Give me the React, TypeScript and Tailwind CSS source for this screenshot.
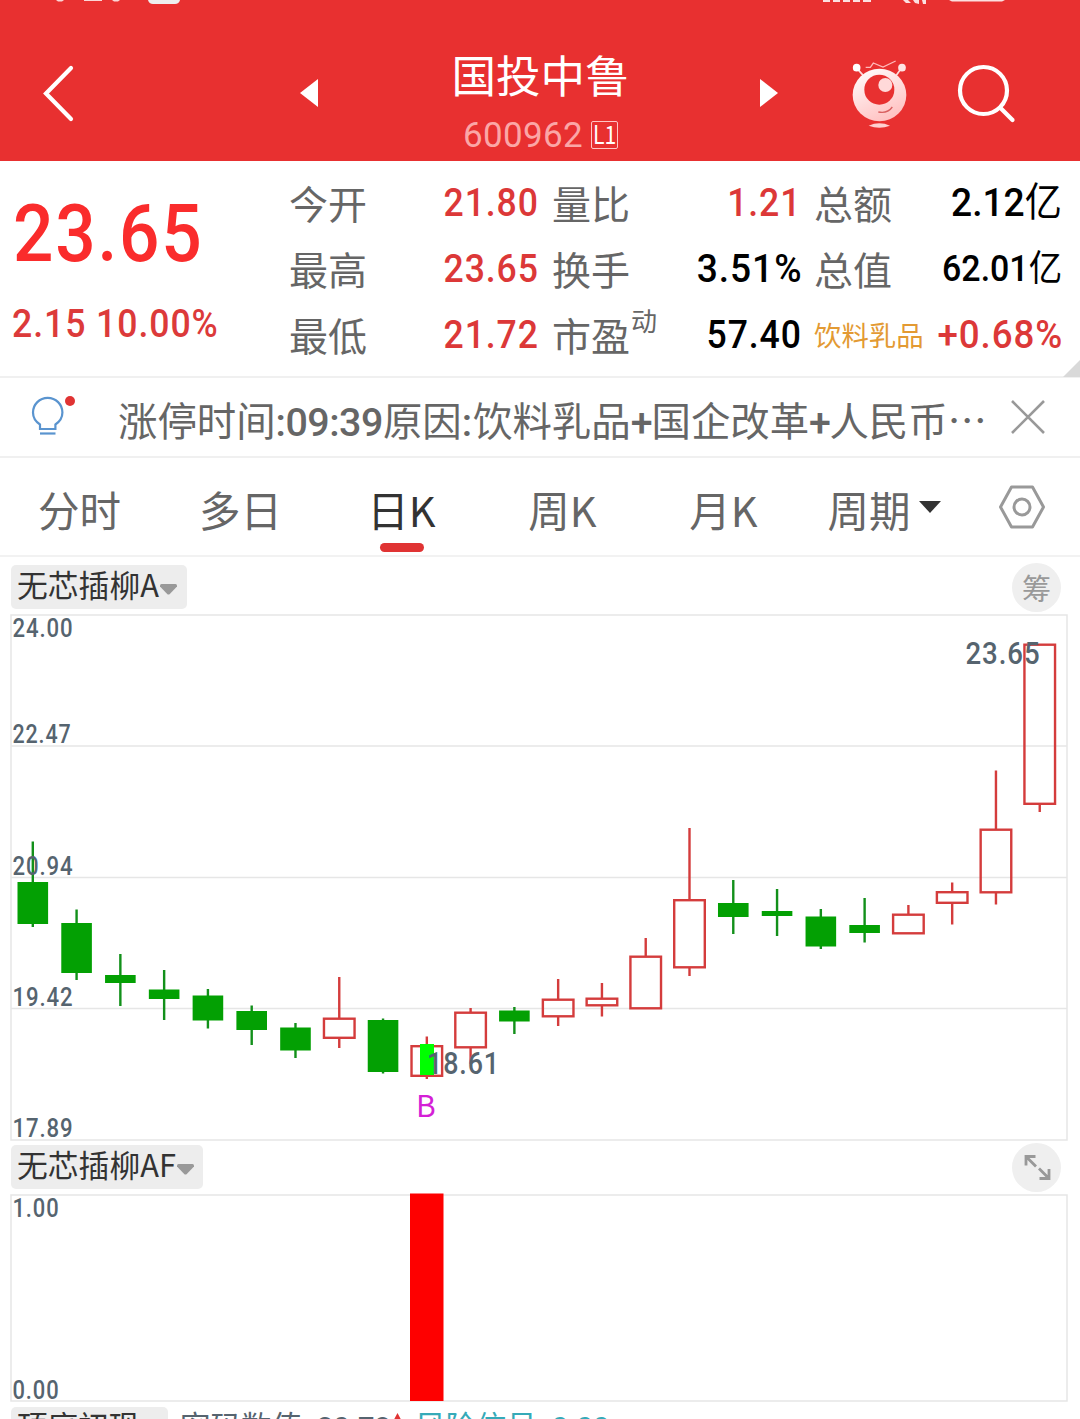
import type { ReactNode } from 'react';

type Candle = { up: boolean; high: number; top: number; bottom: number; low: number };

// Vertical positions inside the price pane, left to right.
const candles: Candle[] = [
  { up: false, high: 841.5, top: 882, bottom: 924, low: 927 },
  { up: false, high: 909.5, top: 923, bottom: 973, low: 980 },
  { up: false, high: 954, top: 975, bottom: 983, low: 1006 },
  { up: false, high: 970, top: 989.5, bottom: 999, low: 1020 },
  { up: false, high: 989, top: 995.5, bottom: 1020.5, low: 1028.5 },
  { up: false, high: 1005.5, top: 1011, bottom: 1030, low: 1045 },
  { up: false, high: 1023, top: 1027.5, bottom: 1050.5, low: 1058 },
  { up: true, high: 977, top: 1017.5, bottom: 1039, low: 1048 },
  { up: false, high: 1018.5, top: 1020, bottom: 1072, low: 1073.5 },
  { up: true, high: 1036.5, top: 1045, bottom: 1077, low: 1079 },
  { up: true, high: 1008, top: 1011.5, bottom: 1048.5, low: 1064 },
  { up: false, high: 1007, top: 1010.5, bottom: 1021.5, low: 1034 },
  { up: true, high: 979, top: 998.5, bottom: 1017.5, low: 1026 },
  { up: true, high: 983, top: 997.5, bottom: 1006.5, low: 1016.5 },
  { up: true, high: 938, top: 955.5, bottom: 1009.5, low: 1009 },
  { up: true, high: 828, top: 899, bottom: 968.5, low: 976 },
  { up: false, high: 880, top: 903, bottom: 917, low: 934 },
  { up: false, high: 889, top: 911, bottom: 916, low: 936 },
  { up: false, high: 909, top: 916.5, bottom: 946.5, low: 949 },
  { up: false, high: 898, top: 925, bottom: 933, low: 942.5 },
  { up: true, high: 905, top: 913.5, bottom: 934.5, low: 934 },
  { up: true, high: 882.5, top: 891, bottom: 904, low: 924.5 },
  { up: true, high: 770.5, top: 828.5, bottom: 893.5, low: 904.5 },
  { up: true, high: 644, top: 643.5, bottom: 805, low: 812 },
];

const tabs = ['分时', '多日', '日K', '周K', '月K'];

function Num({ children, className = '' }: { children: ReactNode; className?: string }) {
  return <span className={`font-[Roboto] font-medium ${className}`}>{children}</span>;
}

function Value({ children, className = '' }: { children: ReactNode; className?: string }) {
  return (
    <Num className={`-mt-[2px] origin-right text-[39.500px] tracking-[1px] ${className}`}>{children}</Num>
  );
}

function Stat({ label, sup, children }: { label: string; sup?: string; children: ReactNode }) {
  return (
    <div className="flex h-[66px] items-center justify-between whitespace-nowrap">
      <span className="relative -mt-[3px] text-[39px] leading-none text-[#666]">
        {label}
        {sup && <span className="absolute -top-[8px] left-full ml-px text-[26px] leading-none">{sup}</span>}
      </span>
      {children}
    </div>
  );
}

function Chip({ children, className }: { children: ReactNode; className: string }) {
  return (
    <div className={`flex h-11 items-center gap-[1px] rounded-[5px] bg-[#ededed] pl-[6px] ${className}`}>
      <span className="-mt-[5px] text-[30.800px] leading-none text-[#333]">{children}</span>
      <svg width="17" height="11" viewBox="0 0 17 11" className="mt-[5px]">
        <path d="M1.500 0h14q1.500 0 1.500 1.500v1L9.800 10q-1.300 1.200-2.600 0L0 2.500v-1Q0 0 1.500 0Z" fill="#999" />
      </svg>
    </div>
  );
}

function Mascot() {
  return (
    <svg width="80" height="85" viewBox="0 0 240 255">
      <defs>
        <linearGradient id="body" x1="0" y1="0" x2="0.5" y2="1">
          <stop offset="0" stopColor="#fff" />
          <stop offset="1" stopColor="#ffc4c4" />
        </linearGradient>
      </defs>
      <g fill="none" stroke="#ffdada" strokeWidth="5">
        <path d="M49 50 70 74M185 50 168 74" />
        <path d="M77 49h14l9-13 29 12 38-18" strokeWidth="4" stroke="#ffb9b9" />
      </g>
      <circle cx="50" cy="50" r="11.500" fill="#fff" />
      <circle cx="186" cy="50" r="11.500" fill="#ffe4e4" />
      <ellipse cx="118.500" cy="132" rx="80.500" ry="79" fill="url(#body)" />
      <circle cx="118" cy="116" r="45" fill="#e83030" />
      <circle cx="136" cy="102" r="21" fill="#ffd9d9" />
      <path d="M115 183q27 6 42-15" fill="none" stroke="#d96060" strokeWidth="4" />
      <path d="M86 224q32-14 64 0-32 12-64 0Z" fill="#ffd0d0" />
    </svg>
  );
}

function Header() {
  return (
    <header className="h-[161px] bg-[#e83030]">
      <svg width="1080" height="25" viewBox="0 0 1080 25" fill="#fff">
        <path d="M56 0h8l-2 1.500h-4ZM84 0h18v1H84ZM112 0h8l-2 1.500h-4Z" opacity=".8" />
        <path d="M148 0h32q-1 4-5 4h-22q-4 0-5-4Z" fill="#eee" />
        <path d="M823 0h7v2h-7ZM833 0h7v2h-7ZM843 0h7v2h-7ZM853 0h7v2h-7ZM863 0h8v2h-8ZM903 0h5l3 3h-5ZM913 0h6v4l-4-1ZM922 0h4v4h-3ZM949 0h56l-3 1.500h-50Z" opacity=".85" />
      </svg>
      <div className="flex h-[136px] items-center">
        <div className="w-[300px] pl-[42px]">
          <svg width="34" height="60" viewBox="0 0 34 60" fill="none" stroke="#fff" strokeWidth="4.200" strokeLinecap="round">
            <path d="M29 5 4 30.500 29 56" />
          </svg>
        </div>
        <svg width="18" height="28" viewBox="0 0 18 28">
          <path d="M0 14 18 0v28Z" fill="#fff" />
        </svg>
        <div className="flex h-full w-[442px] flex-col items-center pt-[26px] pl-[3px]">
          <h1 className="text-[44.500px] leading-[46px] text-white">国投中鲁</h1>
          <div className="mt-[19px] flex items-center gap-2">
            <span className="mt-[2px] font-[Roboto] text-[35px] leading-[35px] tracking-[0.300px] text-[#fba6a6]">600962</span>
            <span className="flex h-7 w-[27px] items-center justify-center rounded-[2px] border border-[#ffc4c4] text-[25px] leading-none text-white">
              <span className="-mt-[2px] inline-block scale-x-[0.850]">L1</span>
            </span>
          </div>
        </div>
        <svg width="18" height="28" viewBox="0 0 18 28">
          <path d="M18 14 0 0v28Z" fill="#fff" />
        </svg>
        <div className="ml-[62px]">
          <Mascot />
        </div>
        <svg width="60" height="60" viewBox="0 0 60 60" className="ml-[36px]" fill="none" stroke="#fff" strokeWidth="4.200" strokeLinecap="round">
          <circle cx="27.500" cy="27.500" r="23.500" />
          <path d="m44.500 45 12 12" />
        </svg>
      </div>
    </header>
  );
}

function Quote() {
  return (
    <section className="relative flex h-[217px] border-b-2 border-[#f0f0f0] pt-[10px]">
      <div className="w-[289px] whitespace-nowrap">
        <Num className="mt-[23px] ml-[13px] block origin-left scale-x-[0.890] text-[80px] leading-[80px] tracking-[2px] text-[#fa2c2c]">23.65</Num>
        <Num className="mt-[30px] ml-[12px] block origin-left scale-x-[0.925] text-[38.500px] leading-[40px] tracking-[1px] text-[#dc3a3a]">2.15 10.00%</Num>
      </div>
      <div className="grid grid-cols-[249px_248px_247px] content-start gap-x-[14px]">
        <Stat label="今开"><Value className="-mr-px scale-x-90 text-[#dc3838]">21.80</Value></Stat>
        <Stat label="量比"><Value className="-mr-px scale-x-90 text-[#dc3838]">1.21</Value></Stat>
        <Stat label="总额">
          <span className="-mt-[7px] -mr-px origin-right scale-x-[0.940] text-[39.500px]"><Num>2.12</Num>亿</span>
        </Stat>
        <Stat label="最高"><Value className="-mr-px scale-x-90 text-[#dc3838]">23.65</Value></Stat>
        <Stat label="换手"><Value className="-mr-[2px] scale-x-[0.940]">3.51%</Value></Stat>
        <Stat label="总值">
          <span className="-mt-[5px] -mr-px origin-right scale-x-[0.930] text-[36px]"><Num className="text-[36.500px]">62.01</Num>亿</span>
        </Stat>
        <Stat label="最低"><Value className="-mr-px scale-x-90 text-[#dc3838]">21.72</Value></Stat>
        <Stat label="市盈" sup="动"><Value className="-mr-[2px] scale-x-90">57.40</Value></Stat>
        <div className="flex h-[66px] items-center justify-between whitespace-nowrap">
          <span className="-mt-[3px] text-[27.400px] text-[#e39a33]">饮料乳品</span>
          <Value className="-mr-[2px] scale-x-[0.930] text-[#dc3838]">+0.68%</Value>
        </div>
      </div>
      <svg width="17" height="17" viewBox="0 0 17 17" className="absolute right-0 -bottom-[1px]">
        <path d="M17 0v17H0Z" fill="#d9d9d9" />
      </svg>
    </section>
  );
}

function Notice() {
  return (
    <section className="flex h-[80px] items-center border-b-2 border-[#f0f0f0] pl-[31px]">
      <svg width="46" height="44" viewBox="0 0 46 44" fill="none">
        <path d="M9 34v-4.500C4.500 26.500 2 22 2 17.500a14.700 14.700 0 0 1 29.400 0c0 4.500-2.500 9-7 12V34Z" stroke="#5a94cf" strokeWidth="2.200" />
        <path d="M9 38.500h15.500" stroke="#5a94cf" strokeWidth="2.200" />
        <circle cx="39" cy="6" r="5" fill="#e03333" />
      </svg>
      <p className="mt-[7px] ml-[41px] w-[870px] whitespace-nowrap text-[39.400px] leading-none text-[#666]">
        涨停时间<Num className="tracking-[-0.500px]">:09:39</Num>原因<Num className="tracking-[1px]">:</Num>饮料乳品
        <Num className="tracking-[-1px]">+</Num>国企改革<Num className="tracking-[-1.500px]">+</Num>人民币⋯
      </p>
      <svg width="36" height="36" viewBox="0 0 36 36" className="ml-[22px]">
        <path d="m2 2 32 32M34 2 2 34" stroke="#999" strokeWidth="2.600" />
      </svg>
    </section>
  );
}

function Tabs() {
  return (
    <nav className="flex h-[99px] items-center border-b-2 border-[#f2f2f2] text-[41.500px] leading-none text-[#666]">
      {tabs.map((tab) => (
        <div key={tab} className={`relative w-[161px] pt-[6px] pr-[2px] text-center ${tab === '日K' ? 'text-[#333]' : ''}`}>
          {tab}
          {tab === '日K' && <span className="absolute top-[60px] left-[58px] h-[9px] w-[44px] rounded-full bg-[#e03333]" />}
        </div>
      ))}
      <div className="flex w-[161px] items-center justify-center gap-[8px] pr-[3px]">
        <span className="pt-[6px]">周期</span>
        <svg width="22" height="12" viewBox="0 0 22 12">
          <path d="M0 0h22L11 12Z" fill="#333" />
        </svg>
      </div>
      <svg width="46" height="44" viewBox="0 0 46 44" className="ml-[33px]" fill="none" stroke="#999" strokeWidth="3">
        <path d="M12.500 2h21L44.500 22l-11 20h-21L1.500 22Z" strokeLinejoin="round" />
        <circle cx="23" cy="22" r="8" />
      </svg>
    </nav>
  );
}

function AxisLabel({ y, width = 61, children }: { y: number; width?: number; children: string }) {
  return (
    <text x={12.5} y={y} textLength={width} lengthAdjust="spacingAndGlyphs" fill="#56646f" className="font-[Roboto] text-[25px] font-medium tracking-[1px]">
      {children}
    </text>
  );
}

function PriceChart() {
  return (
    <svg width="1080" height="527" viewBox="0 614 1080 527" className="block">
      <g stroke="#e6e6e6" strokeWidth="1.500" fill="none">
        <path d="M11 615h1056v525H11Z" />
        <path d="M11 746h1056M11 877.500h1056M11 1008.500h1056" />
      </g>
      {candles.map((c, i) => {
        const x = 32.8 + i * 43.78;
        const color = c.up ? '#d43c3c' : '#03a003';
        return (
          <g key={i} stroke={color} strokeWidth="2.400">
            <path d={`M${x} ${c.high}V${c.top + 1}M${x} ${c.bottom - 1}V${c.low}`} stroke={c.up ? color : '#12901a'} />
            {c.up ? (
              <rect x={x - 15.3} y={c.top + 1.2} width="30.600" height={c.bottom - c.top - 2.4} fill="none" />
            ) : (
              <rect x={x - 15.3} y={c.top} width="30.600" height={c.bottom - c.top} fill={color} stroke="none" />
            )}
          </g>
        );
      })}
      <rect x="420" y="1044" width="14" height="31" fill="#00ff00" />
      <AxisLabel y={637}>24.00</AxisLabel>
      <AxisLabel y={743} width={59}>22.47</AxisLabel>
      <AxisLabel y={875}>20.94</AxisLabel>
      <AxisLabel y={1006}>19.42</AxisLabel>
      <AxisLabel y={1137}>17.89</AxisLabel>
      <g fill="#56646f" className="font-[Roboto] text-[30.500px] font-medium tracking-[1px]">
        <text x="965.500" y="664" textLength="75" lengthAdjust="spacingAndGlyphs">23.65</text>
        <text x="427" y="1074" textLength="73" lengthAdjust="spacingAndGlyphs">18.61</text>
      </g>
      <text x="416" y="1117" fill="#d41fd6" className="text-[30px]">B</text>
    </svg>
  );
}

function SignalChart() {
  return (
    <svg width="1080" height="209" viewBox="0 1193 1080 209" className="block">
      <path d="M11 1195h1056v206H11Z" stroke="#e6e6e6" strokeWidth="1.500" fill="none" />
      <rect x="410" y="1193.500" width="33.500" height="207.500" fill="#fe0000" />
      <AxisLabel y={1217} width={47}>1.00</AxisLabel>
      <AxisLabel y={1399} width={47}>0.00</AxisLabel>
    </svg>
  );
}

export default function App() {
  return (
    <div className="h-[1419px] w-[1080px] overflow-hidden bg-white font-['Noto_Sans_CJK_SC',sans-serif] text-black">
      <Header />
      <Quote />
      <Notice />
      <Tabs />
      <div className="flex h-[57px] items-center justify-between pt-[3px] pr-[19px] pl-[11px]">
        <Chip className="w-[176px]">无芯插柳A</Chip>
        <div className="flex size-[49px] items-center justify-center rounded-full bg-[#efefef] text-[29px] leading-none text-[#999]">筹</div>
      </div>
      <PriceChart />
      <div className="flex h-[52px] items-center justify-between pr-[19px] pl-[11px]">
        <Chip className="w-[192px]">无芯插柳AF</Chip>
        <div className="flex size-[49px] items-center justify-center rounded-full bg-[#efefef]">
          <svg width="28" height="28" viewBox="0 0 28 28" fill="none" stroke="#999" strokeWidth="2.800">
            <path d="M3 12.500V3.500H12.500M3 3.500 13 13.500M26 16v9.500H16.500M26 25.500 16 15.500" />
          </svg>
        </div>
      </div>
      <SignalChart />
      <div className="flex items-start pt-[5px] pl-[11px] text-[30.500px] leading-[34px] whitespace-nowrap">
        <div className="h-11 w-[157px] rounded-[5px] bg-[#ededed] pt-px pl-[6px] text-[#333]">顶底初现</div>
        <div className="ml-[12px] w-[199px] pt-px text-[#56646f]">密码数值<Num className="text-[29px]">: 20.78</Num></div>
        <svg width="15" height="26" viewBox="0 0 15 26" className="mt-[6px] ml-[11px]">
          <path d="M7.500 0 15 14h-5v12H5V14H0Z" fill="#e03333" />
        </svg>
        <div className="ml-[10px] pt-px text-[#35aab8]">风险信号<Num className="text-[29px]">: 0.00</Num></div>
      </div>
    </div>
  );
}
